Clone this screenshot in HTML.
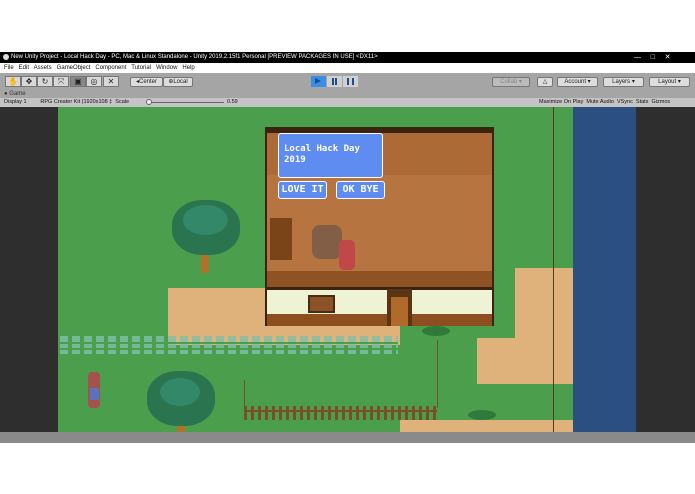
<!DOCTYPE html><html><head><style>
*{margin:0;padding:0;box-sizing:border-box}
body{width:695px;height:494px;background:#fff;position:relative;overflow:hidden;font-family:"Liberation Sans",sans-serif}
.a{position:absolute}
.t{font-size:6px;color:#111;white-space:nowrap}
.btn{position:absolute;background:#ddd;border:1px solid #777;border-radius:2px;font-size:6px;color:#222;text-align:center;line-height:8px;height:10px}
.sand{position:absolute;background:#deb27a}
.pix{font-family:"DejaVu Sans Mono",monospace;color:#fff;font-weight:bold}
.tb{position:absolute;top:76px;width:16px;height:11px;background:#d8d8d8;border:1px solid #777;font-size:8px;line-height:9px;text-align:center;color:#222}
</style></head><body>
<div class="a" style="left:0;top:52px;width:695px;height:11px;background:#000"></div>
<div class="a t" style="left:11px;top:54px;color:#fff">New Unity Project - Local Hack Day - PC, Mac &amp; Linux Standalone - Unity 2019.2.15f1 Personal [PREVIEW PACKAGES IN USE] &lt;DX11&gt;</div>
<div class="a" style="left:3px;top:54px;width:6px;height:6px;border-radius:50%;background:#ddd"></div>
<div class="a t" style="left:634px;top:53px;color:#fff;font-size:7px">—&nbsp;&nbsp;&nbsp;&nbsp;&nbsp;□&nbsp;&nbsp;&nbsp;&nbsp;&nbsp;✕</div>
<div class="a" style="left:0;top:63px;width:695px;height:10px;background:#fff"></div>
<div class="a t" style="left:4px;top:65px">File&nbsp;&nbsp; Edit&nbsp;&nbsp; Assets&nbsp;&nbsp; GameObject&nbsp;&nbsp; Component&nbsp;&nbsp; Tutorial&nbsp;&nbsp; Window&nbsp;&nbsp; Help</div>
<div class="a" style="left:0;top:73px;width:695px;height:17px;background:#a5a5a5"></div>
<div class="tb" style="left:5px">✋</div>
<div class="tb" style="left:21px">✥</div>
<div class="tb" style="left:37px">↻</div>
<div class="tb" style="left:53px">⤧</div>
<div class="tb" style="left:70px;background:#888">▣</div>
<div class="tb" style="left:86px">◎</div>
<div class="tb" style="left:103px">✕</div>
<div class="btn" style="left:130px;top:77px;width:33px">◂Center</div>
<div class="btn" style="left:163px;top:77px;width:30px">⊕Local</div>
<div class="a" style="left:311px;top:76px;width:15px;height:11px;background:#3a8ee6"></div>
<div class="a" style="left:327px;top:76px;width:15px;height:11px;background:#d0d0d0"></div>
<div class="a" style="left:343px;top:76px;width:15px;height:11px;background:#d0d0d0"></div>
<div class="a" style="left:315px;top:78px;width:0;height:0;border-left:6px solid #1a4e90;border-top:3.5px solid transparent;border-bottom:3.5px solid transparent"></div>
<div class="a" style="left:332px;top:78px;width:5px;height:7px;border-left:2px solid #1a4e90;border-right:2px solid #1a4e90"></div>
<div class="a" style="left:347px;top:78px;width:7px;height:7px;border-left:2px solid #1a4e90;border-right:2px solid #1a4e90"></div>
<div class="btn" style="left:492px;top:77px;width:38px;color:#888;background:#bbb">Collab ▾</div>
<div class="btn" style="left:537px;top:77px;width:16px">△</div>
<div class="btn" style="left:557px;top:77px;width:41px">Account ▾</div>
<div class="btn" style="left:603px;top:77px;width:41px">Layers ▾</div>
<div class="btn" style="left:649px;top:77px;width:41px">Layout ▾</div>
<div class="a" style="left:0;top:90px;width:695px;height:9px;background:#a5a5a5"></div>
<div class="a t" style="left:4px;top:91px;color:#333">● Game</div>
<div class="a" style="left:0;top:98px;width:695px;height:9px;background:#c4c4c4"></div>
<div class="a t" style="left:4px;top:99px;font-size:5.5px">Display 1&nbsp;&nbsp;&nbsp;&nbsp;&nbsp;&nbsp;&nbsp;&nbsp; RPG Creater Kit (1920x108 ‡&nbsp; Scale</div>
<div class="a" style="left:148px;top:102px;width:76px;height:1px;background:#666"></div>
<div class="a" style="left:146px;top:99px;width:6px;height:6px;border-radius:50%;background:#eee;border:1px solid #666"></div>
<div class="a t" style="left:227px;top:99px;font-size:5.5px">0.59</div>
<div class="a t" style="left:539px;top:99px;font-size:5.5px">Maximize On Play&nbsp; Mute Audio&nbsp; VSync&nbsp; Stats&nbsp; Gizmos</div>
<!-- game -->
<div class="a" style="left:0;top:107px;width:695px;height:325px;background:#2e2e2e"></div>
<div class="a" style="left:58px;top:107px;width:515px;height:325px;background:#4a9e4c"></div>
<div class="a" style="left:573px;top:107px;width:63px;height:325px;background:#2c4f82"></div>
<div class="sand" style="left:168px;top:288px;width:232px;height:57px"></div>
<div class="sand" style="left:515px;top:268px;width:58px;height:70px"></div>
<div class="sand" style="left:477px;top:338px;width:96px;height:46px"></div>
<div class="sand" style="left:400px;top:420px;width:173px;height:12px"></div>
<div class="a" style="left:553px;top:107px;width:1px;height:325px;background:#5a3a1c"></div>
<div class="a" style="left:60px;top:336px;width:338px;height:18px;background:repeating-linear-gradient(90deg,#7fc1a8 0 8px,transparent 8px 12px);opacity:.8"></div>
<div class="a" style="left:60px;top:342px;width:338px;height:2px;background:#4a9e4c"></div>
<div class="a" style="left:60px;top:348px;width:338px;height:2px;background:#4a9e4c"></div>
<!-- trees -->
<div class="a" style="left:201px;top:245px;width:8px;height:28px;background:#b0722a"></div>
<div class="a" style="left:172px;top:200px;width:68px;height:55px;border-radius:45%;background:#2a7550"></div>
<div class="a" style="left:183px;top:205px;width:45px;height:30px;border-radius:50%;background:#33886a"></div>
<div class="a" style="left:177px;top:419px;width:8px;height:13px;background:#b0722a"></div>
<div class="a" style="left:147px;top:371px;width:68px;height:55px;border-radius:45%;background:#2a7550"></div>
<div class="a" style="left:160px;top:378px;width:40px;height:28px;border-radius:50%;background:#33886a"></div>
<div class="a" style="left:422px;top:326px;width:28px;height:10px;border-radius:50%;background:#2f7a3a"></div>
<div class="a" style="left:468px;top:410px;width:28px;height:10px;border-radius:50%;background:#2f7a3a"></div>
<!-- fence -->
<div class="a" style="left:244px;top:406px;width:193px;height:14px;background:repeating-linear-gradient(90deg,#7a4f26 0 3px,transparent 3px 7px)"></div>
<div class="a" style="left:244px;top:410px;width:193px;height:2px;background:#7a4f26"></div>
<div class="a" style="left:244px;top:380px;width:1px;height:28px;background:#7a4f26"></div>
<div class="a" style="left:437px;top:340px;width:1px;height:68px;background:#7a4f26"></div>
<div class="a" style="left:88px;top:372px;width:12px;height:36px;background:#a4524a;border-radius:4px"></div>
<div class="a" style="left:90px;top:388px;width:9px;height:12px;background:#5a72c0"></div>
<!-- house -->
<div class="a" style="left:265px;top:127px;width:229px;height:199px;background:#3a2410"></div>
<div class="a" style="left:267px;top:133px;width:225px;height:150px;background:#b57440"></div>
<div class="a" style="left:267px;top:133px;width:225px;height:42px;background:#ab6a36"></div>
<div class="a" style="left:267px;top:271px;width:225px;height:16px;background:#8f5222"></div>
<div class="a" style="left:267px;top:290px;width:225px;height:24px;background:#eef3d6"></div>
<div class="a" style="left:267px;top:314px;width:225px;height:12px;background:#8e4f20"></div>
<div class="a" style="left:387px;top:289px;width:25px;height:37px;background:#5a3414"></div>
<div class="a" style="left:391px;top:297px;width:17px;height:29px;background:#b06a2a"></div>
<div class="a" style="left:308px;top:295px;width:27px;height:18px;background:#8a5226;border:2px solid #4a2a10"></div>
<div class="a" style="left:270px;top:218px;width:22px;height:42px;background:#7a4418"></div>
<div class="a" style="left:312px;top:225px;width:30px;height:34px;background:#7a5a48;border-radius:8px;opacity:.85"></div>
<div class="a" style="left:339px;top:240px;width:16px;height:30px;background:#c04848;border-radius:5px"></div>
<div class="a" style="left:278px;top:133px;width:105px;height:45px;background:#5e8cf0;border:1.5px solid #fff;border-radius:3px"></div>
<div class="a pix" style="left:284px;top:144px;font-size:9px;line-height:11px">Local Hack Day<br>2019</div>
<div class="a pix" style="left:278px;top:181px;width:49px;height:18px;background:#5e8cf0;border:1.5px solid #fff;border-radius:3px;font-size:10px;text-align:center;line-height:15px">LOVE IT</div>
<div class="a pix" style="left:336px;top:181px;width:49px;height:18px;background:#5e8cf0;border:1.5px solid #fff;border-radius:3px;font-size:10px;text-align:center;line-height:15px">OK BYE</div>
<div class="a" style="left:0;top:432px;width:695px;height:11px;background:#8a8a8a"></div>
</body></html>
